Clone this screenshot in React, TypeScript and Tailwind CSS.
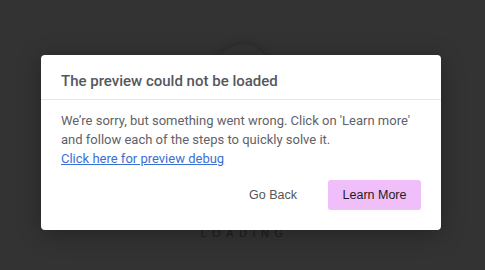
import React from 'react';

export default function App() {
  return (
    <div className="relative w-[485px] h-[270px] overflow-hidden bg-[#333333] font-['Roboto',sans-serif]">
      {/* Loading screen behind the modal */}
      <div className="flex flex-col items-center pt-[44px]">
        <div className="w-[54px] h-[54px] rounded-full bg-[#333333] shadow-[0_0_10px_rgba(0,0,0,0.22)]" />
        <div className="mt-[127px] ml-[4px] text-[11px] tracking-[5.5px] text-[#1d1d1d] font-['Liberation_Sans',sans-serif]">
          LOADING
        </div>
      </div>

      {/* Modal */}
      <div className="absolute left-[41px] top-[55px] w-[400px] bg-white rounded-[4px] shadow-[0_4px_24px_rgba(0,0,0,0.3)]">
        <div className="h-[45px] pt-[19px] px-5 border-b border-[#e6e6e6]">
          <h2 className="text-[15px] font-medium text-[#55585d] leading-none">
            The preview could not be loaded
          </h2>
        </div>
        <div className="px-5 pt-[11px] pb-5">
          <p className="text-[13px] leading-[19px] text-[#5f6267]">
            We’re sorry, but something went wrong. Click on 'Learn more' and follow each of the steps to quickly solve it.
          </p>
          <a href="#" className="block text-[13px] leading-[19px] text-[#3b6fd4] underline">
            Click here for preview debug
          </a>
          <div className="flex justify-end items-center gap-[15px] mt-[12px] font-['Liberation_Sans',sans-serif]">
            <button className="h-[30px] px-4 text-[12.5px] text-[#555555] rounded">
              Go Back
            </button>
            <button className="h-[30px] w-[93px] text-[12.5px] text-[#1c1c1c] bg-[#f0bef8] rounded-[3px]">
              Learn More
            </button>
          </div>
        </div>
      </div>
    </div>
  );
}
